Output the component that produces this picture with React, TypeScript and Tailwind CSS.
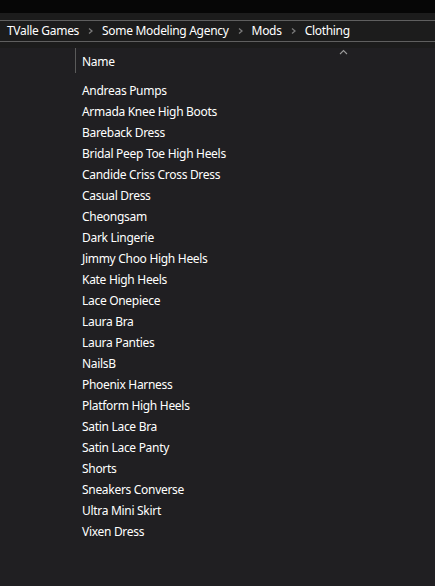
import React from 'react';

const items = [
  'Andreas Pumps',
  'Armada Knee High Boots',
  'Bareback Dress',
  'Bridal Peep Toe High Heels',
  'Candide Criss Cross Dress',
  'Casual Dress',
  'Cheongsam',
  'Dark Lingerie',
  'Jimmy Choo High Heels',
  'Kate High Heels',
  'Lace Onepiece',
  'Laura Bra',
  'Laura Panties',
  'NailsB',
  'Phoenix Harness',
  'Platform High Heels',
  'Satin Lace Bra',
  'Satin Lace Panty',
  'Shorts',
  'Sneakers Converse',
  'Ultra Mini Skirt',
  'Vixen Dress',
];

const crumbs = ['TValle Games', 'Some Modeling Agency', 'Mods', 'Clothing'];

function Chevron() {
  return (
    <svg width="5" height="8" viewBox="0 0 5 8" className="mx-[9px]">
      <path d="M1 1.5 L4 4 L1 6.5" fill="none" stroke="#7a7a7a" strokeWidth="1.3" />
    </svg>
  );
}

export default function App() {
  return (
    <div
      className="flex h-[586px] w-[435px] flex-col overflow-hidden bg-[#201f22] text-white"
      style={{ fontFamily: '"Noto Sans", "Open Sans", sans-serif' }}
    >
      <div className="h-[13px] bg-[#060606]" />
      <div className="h-[7px] bg-[#1c1c1c]" />
      <div className="flex h-[22px] items-center border-y border-[#5f5f5f] bg-[#1c1c1c] pl-[7px] text-[12px] tracking-[-0.3px]">
        {crumbs.map((c, i) => (
          <React.Fragment key={c}>
            {i > 0 && <Chevron />}
            <span className="whitespace-nowrap">{c}</span>
          </React.Fragment>
        ))}
      </div>
      <div className="h-[6px] bg-[#1c1c1c]" />
      <div className="relative flex h-[26px] items-center">
        <div className="ml-[75px] h-[25px] w-px self-start bg-[#5a5a5a]" />
        <span className="ml-[6px] mt-[2px] text-[12px] tracking-[-0.3px]">Name</span>
        <svg width="9" height="6" viewBox="0 0 9 6" className="absolute left-[339px] top-[1px]">
          <path d="M1 5 L4.5 1.5 L8 5" fill="none" stroke="#9a9a9a" strokeWidth="1.1" />
        </svg>
      </div>
      <ul className="mt-[6px] pl-[82px] text-[12px] tracking-[-0.3px]">
        {items.map((it) => (
          <li key={it} className="flex h-[21px] items-center whitespace-nowrap">
            {it}
          </li>
        ))}
      </ul>
    </div>
  );
}
